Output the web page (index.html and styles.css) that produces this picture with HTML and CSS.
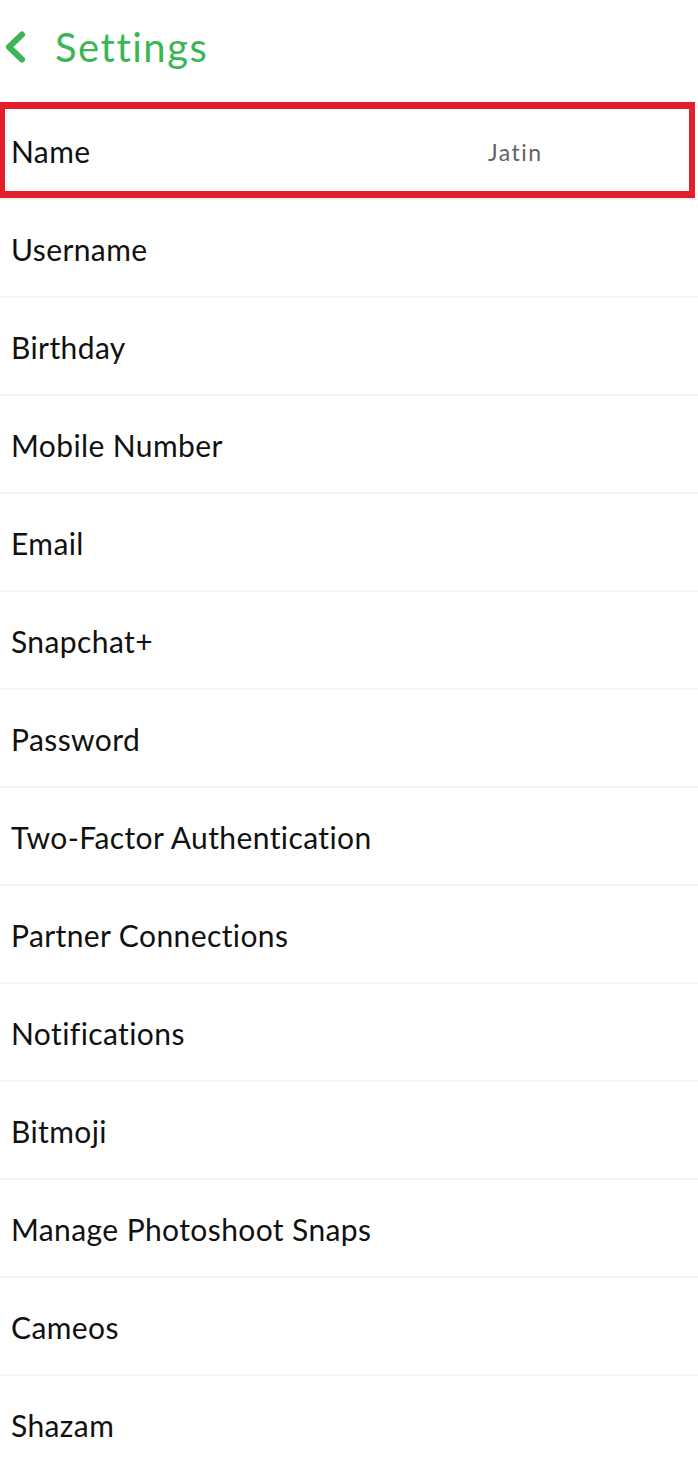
FILE: index.html
```html
<!DOCTYPE html>
<html lang="en">
<head>
<meta charset="utf-8">
<title>Settings</title>
<link rel="stylesheet" href="styles.css">
</head>
<body>
<header class="header">
  <svg class="back" width="30" height="40" viewBox="0 0 30 40" aria-hidden="true">
    <path d="M22 7.5 L9 20 L22 32.5" fill="none" stroke="#3cb554" stroke-width="6" stroke-linecap="round" stroke-linejoin="round"/>
  </svg>
  <h1 class="title">Settings</h1>
</header>
<ul class="list">
  <li class="row highlighted"><span class="label">Name</span><span class="value">Jatin</span></li>
  <li class="row"><span class="label">Username</span></li>
  <li class="row"><span class="label">Birthday</span></li>
  <li class="row"><span class="label">Mobile Number</span></li>
  <li class="row"><span class="label">Email</span></li>
  <li class="row"><span class="label">Snapchat+</span></li>
  <li class="row"><span class="label">Password</span></li>
  <li class="row"><span class="label">Two-Factor Authentication</span></li>
  <li class="row"><span class="label">Partner Connections</span></li>
  <li class="row"><span class="label">Notifications</span></li>
  <li class="row"><span class="label">Bitmoji</span></li>
  <li class="row"><span class="label">Manage Photoshoot Snaps</span></li>
  <li class="row"><span class="label">Cameos</span></li>
  <li class="row"><span class="label">Shazam</span></li>
</ul>
</body>
</html>
```
FILE: styles.css
```css
html, body {
  margin: 0;
  padding: 0;
  background: #ffffff;
}
body {
  width: 698px;
  height: 1460px;
  overflow: hidden;
  font-family: Lato, "Noto Sans", sans-serif;
}
.header {
  height: 102px;
  display: flex;
  align-items: center;
  padding-left: 0;
  padding-bottom: 8px;
  box-sizing: border-box;
}
.back {
  display: block;
  margin-right: 25px;
}
.title {
  margin: 0;
  font-size: 40px;
  font-weight: 400;
  color: #3cb554;
  letter-spacing: 1.5px;
}
.list {
  list-style: none;
  margin: 0;
  padding: 0;
}
.row {
  position: relative;
  height: 98px;
  box-sizing: border-box;
  border-bottom: 2px solid #f4f4f4;
  display: flex;
  align-items: center;
  padding-left: 11px;
  padding-top: 2px;
}
.label {
  font-size: 30px;
  color: #111111;
  letter-spacing: 0.4px;
}
.value {
  position: absolute;
  left: 488px;
  top: 36px;
  font-size: 23px;
  color: #5f6368;
  letter-spacing: 1.5px;
}
.highlighted::after {
  content: "";
  position: absolute;
  left: 0;
  top: 0;
  width: 695px;
  height: 96px;
  box-sizing: border-box;
  border: 7px solid #e41f2c;
  border-left-width: 5px;
  border-right-width: 6px;
}
```
